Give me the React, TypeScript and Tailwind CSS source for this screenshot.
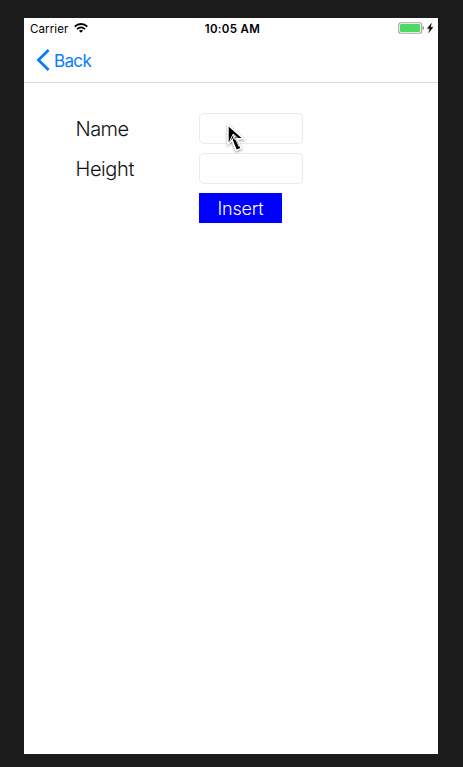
import React from "react";

function StatusBar() {
  return (
    <div className="flex h-5 items-center justify-between pl-[6px] pr-1 text-[11.5px] leading-5 text-black">
      <div className="flex w-[138px] items-center gap-[6px] pt-[1px]">
        <span className="tracking-[0.1px]">Carrier</span>
        <svg width="14" height="10" viewBox="0 0 14 10" fill="none" stroke="#000" className="-mt-[1px]">
          <path d="M.7 3.6C4.3.2 9.7.2 13.3 3.6" strokeWidth="1.9" />
          <path d="M3 6.1c2.4-2.1 5.6-2.1 8 0" strokeWidth="1.7" />
          <path d="M7 9.7 4.9 7.7c1.2-1.1 3-1.1 4.2 0Z" fill="#000" stroke="none" />
        </svg>
      </div>
      <span className="pl-[1px] pt-[1px] font-semibold tracking-[0.35px]">10:05 AM</span>
      <div className="flex w-[138px] justify-end">
        <svg width="36" height="12" viewBox="0 0 36 12">
          <rect x=".7" y=".7" width="23" height="10.6" rx="2.3" fill="#fff" stroke="#a4a4a7" strokeWidth="1.1" />
          <rect x="2" y="2" width="20.2" height="8" rx="1" fill="#4cd964" />
          <path d="M24.6 4c1.8.3 1.8 3.7 0 4Z" fill="#858588" />
          <path d="M33.5 1.2 29.2 6.5h2.6L30.6 10.8l4.5-5.6h-2.6Z" fill="#000" stroke="#000" strokeWidth=".3" />
        </svg>
      </div>
    </div>
  );
}

function Pointer() {
  return (
    <svg
      className="pointer-events-none absolute left-[26px] top-[9px] overflow-visible drop-shadow-[0_1px_1px_rgba(0,0,0,0.4)]"
      width="21"
      height="31"
      viewBox="0 0 21 31"
    >
      <path d="M2.9 3v19l4.1-3.8 4.2 10.3 5.1-2.1-4.3-9.7h6.5Z" fill="#000" stroke="#fff" strokeWidth="1.6" />
      <path d="m4.8 18.9 3.4-6.8 1.2 5.2M8.2 12.1l6.2 5.5-3.7-.5 3.3 7.5M6.6 19l3.3-5.2.4 4.3" fill="none" stroke="#fff" strokeWidth=".9" />
    </svg>
  );
}

export default function App() {
  return (
    <div className="h-[767px] w-[463px] bg-[#1b1b1b] pl-6 pt-[18px] font-['Inter','Liberation_Sans',sans-serif]">
      <main className="h-[736px] w-[414px] bg-[#fefefe]">
        <StatusBar />
        <nav className="flex h-[45px] border-b border-[#d8d8d9] pl-3 pb-[1px]">
          <button className="flex items-center gap-1 text-[17px] leading-5 tracking-[-0.65px] text-[#087cff]">
            <svg width="14" height="22" viewBox="0 0 14 22" fill="none" stroke="currentColor" strokeWidth="2.8">
              <path d="M12.6 1 2.4 11l10.2 10" />
            </svg>
            <span className="pt-[2px]">Back</span>
          </button>
        </nav>
        <form className="grid grid-cols-[123.5px_104px] gap-y-[9px] pl-[51.5px] pt-[30px] text-[20px] font-light text-[#111]">
          <label htmlFor="name" className="flex h-[31px] items-center tracking-[-0.55px]">Name</label>
          <div className="relative h-[31px]">
            <input id="name" className="h-full w-full rounded-[5px] border border-[#eaeaea] bg-transparent" />
            <Pointer />
          </div>
          <label htmlFor="height" className="flex h-[31px] items-center tracking-[-0.4px]">Height</label>
          <input id="height" className="h-[31px] w-full rounded-[5px] border border-[#eaeaea] bg-transparent" />
          <button type="button" className="col-start-2 h-[30px] w-[83px] bg-[#0000fe] pt-[1px] text-[18px] leading-[29px] tracking-[-0.2px] text-white">
            Insert
          </button>
        </form>
      </main>
    </div>
  );
}
